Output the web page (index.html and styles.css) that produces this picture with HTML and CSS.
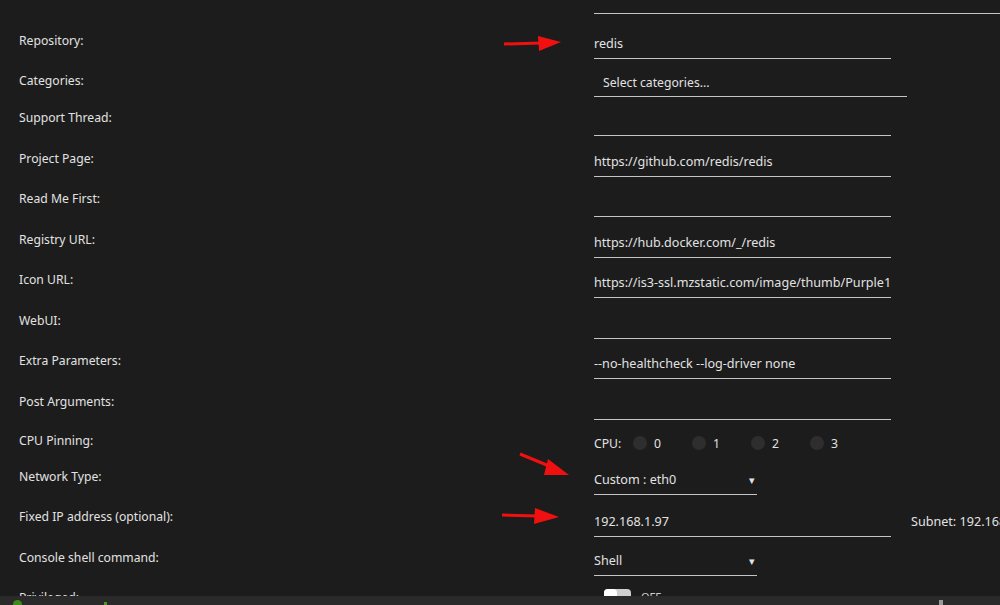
FILE: index.html
```html
<!DOCTYPE html>
<html>
<head>
<meta charset="utf-8">
<link rel="stylesheet" href="styles.css">
</head>
<body>
<div class="page">
  <div class="row row-top">
    <div class="label"></div>
    <div class="field"><div class="topline"></div></div>
  </div>
  <div class="row row-repo">
    <div class="label">Repository:</div>
    <div class="field"><input class="input" type="text" value="redis"></div>
  </div>
  <div class="row row-cat">
    <div class="label">Categories:</div>
    <div class="field"><div class="cats">Select categories...</div></div>
  </div>
  <div class="row row-support">
    <div class="label">Support Thread:</div>
    <div class="field"><input class="input" type="text" value=""></div>
  </div>
  <div class="row">
    <div class="label">Project Page:</div>
    <div class="field"><input class="input" type="text" value="https://github.com/redis/redis"></div>
  </div>
  <div class="row">
    <div class="label">Read Me First:</div>
    <div class="field"><input class="input" type="text" value=""></div>
  </div>
  <div class="row">
    <div class="label">Registry URL:</div>
    <div class="field"><input class="input" type="text" value="https://hub.docker.com/_/redis"></div>
  </div>
  <div class="row">
    <div class="label">Icon URL:</div>
    <div class="field"><input class="input" type="text" value="https://is3-ssl.mzstatic.com/image/thumb/Purple128/v4/redis.png"></div>
  </div>
  <div class="row">
    <div class="label">WebUI:</div>
    <div class="field"><input class="input" type="text" value=""></div>
  </div>
  <div class="row">
    <div class="label">Extra Parameters:</div>
    <div class="field"><input class="input" type="text" value="--no-healthcheck --log-driver none"></div>
  </div>
  <div class="row">
    <div class="label">Post Arguments:</div>
    <div class="field"><input class="input" type="text" value=""></div>
  </div>
  <div class="row row-cpu">
    <div class="label">CPU Pinning:</div>
    <div class="field cpus">
      <span class="cpu-title">CPU:</span>
      <span class="cpu"><span class="dot"></span><span class="num">0</span></span>
      <span class="cpu"><span class="dot"></span><span class="num">1</span></span>
      <span class="cpu"><span class="dot"></span><span class="num">2</span></span>
      <span class="cpu"><span class="dot"></span><span class="num">3</span></span>
    </div>
  </div>
  <div class="row row-net">
    <div class="label">Network Type:</div>
    <div class="field"><div class="select"><span>Custom : eth0</span><span class="caret">&#9662;</span></div></div>
  </div>
  <div class="row row-ip">
    <div class="label">Fixed IP address (optional):</div>
    <div class="field ip-field">
      <input class="input" type="text" value="192.168.1.97">
      <span class="subnet">Subnet: 192.168.1.0/24</span>
    </div>
  </div>
  <div class="row row-shell">
    <div class="label">Console shell command:</div>
    <div class="field"><div class="select"><span>Shell</span><span class="caret">&#9662;</span></div></div>
  </div>
  <div class="row row-priv">
    <div class="label">Privileged:</div>
    <div class="field toggle-field">
      <span class="toggle"><span class="knob"></span></span>
      <span class="toggle-text">OFF</span>
    </div>
  </div>
</div>

<svg class="arrow arrow-1" width="70" height="20" viewBox="0 0 70 20">
  <line x1="2" y1="10" x2="40" y2="9" stroke="#f01010" stroke-width="3"/>
  <polygon points="36,2 59,8 37,17" fill="#f01010"/>
</svg>
<svg class="arrow arrow-2" width="60" height="34" viewBox="0 0 60 34">
  <line x1="2" y1="3" x2="36" y2="17" stroke="#f01010" stroke-width="3"/>
  <polygon points="30,8 51,24 26,24" fill="#f01010"/>
</svg>
<svg class="arrow arrow-3" width="70" height="20" viewBox="0 0 70 20">
  <line x1="2" y1="8" x2="38" y2="9" stroke="#f01010" stroke-width="3"/>
  <polygon points="35,1 59,10 34,17" fill="#f01010"/>
</svg>

<div class="footer">
  <span class="f-dot"></span>
  <span class="f-mark"></span>
  <span class="f-icon"></span>
</div>
</body>
</html>
```
FILE: styles.css
```css
html, body {
  margin: 0;
  padding: 0;
  background: #1c1c1c;
  overflow: hidden;
}
body {
  width: 1000px;
  height: 605px;
  position: relative;
  font-family: "Noto Sans", "Open Sans", sans-serif;
  font-size: 12.2px;
  color: #e2e2e2;
}
.page {
  display: flex;
  flex-direction: column;
}
.row {
  display: flex;
  height: 40.5px;
  align-items: flex-end;
}
.label {
  flex: 0 0 594px;
  width: 594px;
  padding-left: 19px;
  box-sizing: border-box;
  line-height: 16px;
  margin-bottom: 10px;
  white-space: nowrap;
}
.field {
  flex: 1;
  min-width: 0;
  display: flex;
  align-items: flex-end;
  overflow: hidden;
  font-size: 12.6px;
}
.row-top { height: 14px; }
.row-top .label { margin-bottom: 0; }
.topline {
  width: 100%;
  border-bottom: 1px solid #c4c4c4;
}
.row-repo { height: 45px; }
.row-cat { height: 38px; }
.row-cat .label { margin-bottom: 8px; }
.row-support { height: 39px; }
.input {
  flex: 0 0 297px;
  width: 297px;
  height: 30px;
  box-sizing: border-box;
  background: transparent;
  border: none;
  border-bottom: 1px solid #c4c4c4;
  color: #e2e2e2;
  font: inherit;
  padding: 0;
  margin: 0;
  outline: none;
}
.cats {
  width: 313px;
  height: 30px;
  box-sizing: border-box;
  border-bottom: 1px solid #c4c4c4;
  padding-left: 9px;
  padding-top: 3px;
  line-height: 26px;
  font-size: 12.2px;
}
.row-cpu { height: 42px; align-items: center; }
.row-cpu .label { margin-bottom: 0; }
.cpus { align-items: center; padding-top: 5px; font-size: 12.2px; }
.cpu-title { width: 39px; }
.cpu {
  display: inline-flex;
  align-items: center;
  width: 59px;
}
.dot {
  width: 14px;
  height: 14px;
  border-radius: 50%;
  background: #2e2e2e;
  margin-right: 7px;
}
.row-net { height: 33px; }
.select {
  width: 163px;
  height: 28px;
  box-sizing: border-box;
  border-bottom: 1px solid #c4c4c4;
  display: flex;
  justify-content: space-between;
  align-items: center;
  padding-bottom: 1px;
}
.caret {
  font-size: 11px;
  margin-right: 2px;
}
.row-ip { height: 42px; }
.row-ip .label { margin-bottom: 12px; }
.subnet {
  margin-left: 20px;
  margin-bottom: 7px;
  white-space: nowrap;
}
.row-shell { height: 39px; }
.row-priv { height: 40px; }
.toggle-field {
  align-self: flex-start;
  align-items: center;
  margin-top: 13px;
}
.toggle {
  margin-left: 10px;
  flex: 0 0 27px;
  height: 14px;
  border-radius: 4px;
  background: #cfcfcf;
  position: relative;
}
.knob {
  position: absolute;
  left: 0;
  top: 0;
  width: 13px;
  height: 14px;
  border-radius: 4px;
  background: #ffffff;
}
.toggle-text {
  margin-left: 10px;
  font-size: 11px;
  color: #cfcfcf;
}
.arrow { position: absolute; }
.arrow-1 { left: 502px; top: 34px; }
.arrow-2 { left: 518px; top: 451px; }
.arrow-3 { left: 500px; top: 507px; }
.footer {
  position: absolute;
  left: 0;
  bottom: 0;
  width: 1000px;
  height: 9px;
  background: #2a2a2a;
  overflow: hidden;
}
.f-dot {
  position: absolute;
  left: 13px;
  top: 4px;
  width: 9px;
  height: 9px;
  border-radius: 50%;
  background: #3d8c1a;
}
.f-mark {
  position: absolute;
  left: 104px;
  top: 6px;
  width: 3px;
  height: 3px;
  background: #4a9a20;
}
.f-icon {
  position: absolute;
  left: 939px;
  top: 4px;
  width: 4px;
  height: 5px;
  background: #9a9a9a;
}
```
